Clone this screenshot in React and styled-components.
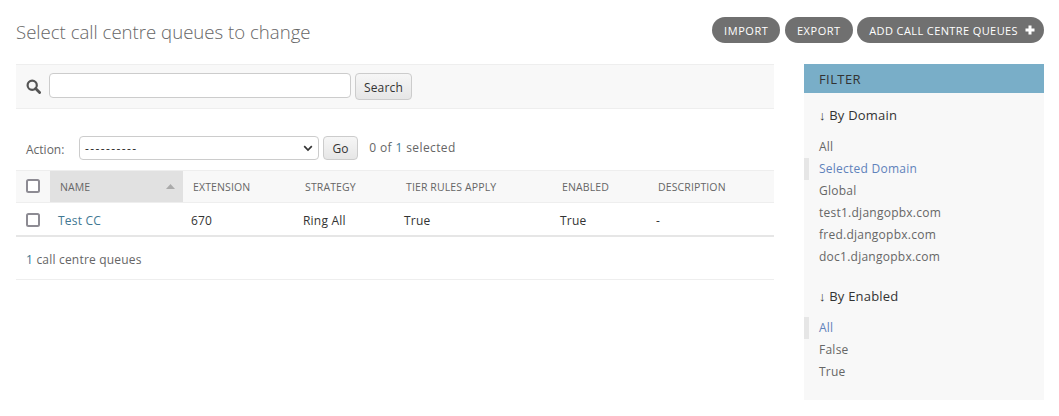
import React from "react";
import styled, { createGlobalStyle } from "styled-components";

const Global = createGlobalStyle`
  html, body { margin: 0; padding: 0; background: #fff; }
  body { font-family: "Open Sans", "Noto Sans", sans-serif; font-size: 12px; color: #666; }
`;

const Page = styled.div`
  width: 1059px;
  height: 416px;
  overflow: hidden;
  padding: 17px 15px 0 16px;
  box-sizing: border-box;
`;
const Header = styled.div`
  display: flex;
  justify-content: space-between;
  align-items: flex-start;
  height: 47px;
`;
const Title = styled.h1`
  margin: 0;
  font-size: 18.6px;
  line-height: 30px;
  font-weight: 300;
  color: #666;
`;
const Tools = styled.div`
  display: flex;
  gap: 4.5px;
`;
const Pill = styled.a`
  display: flex;
  align-items: center;
  gap: 7px;
  height: 26px;
  padding: 0 ${(p) => (p.$icon ? 9 : 12)}px 0 12px;
  border-radius: 13px;
  background: #707070;
  color: #fff;
  font-size: 11px;
  letter-spacing: ${(p) => (p.$icon ? 0.4 : 0.55)}px;
  text-transform: uppercase;
`;
const Columns = styled.div`
  display: flex;
  justify-content: space-between;
  align-items: flex-start;
`;
const Main = styled.div`
  width: 758px;
`;
const Toolbar = styled.div`
  display: flex;
  align-items: center;
  height: 45px;
  box-sizing: border-box;
  padding: 0 0 0 10px;
  background: #f8f8f8;
  border-top: 1px solid #eee;
  border-bottom: 1px solid #eee;
`;
const SearchInput = styled.div`
  width: 302px;
  height: 25px;
  box-sizing: border-box;
  margin: 0 0 2px 8px;
  background: #fff;
  border: 1px solid #ccc;
  border-radius: 4px;
`;
const Btn = styled.button`
  height: ${(p) => p.$h}px;
  margin-left: 4px;
  padding: 1px ${(p) => p.$pad}px 0;
  border: 1px solid #ccc;
  border-radius: 4px;
  background: linear-gradient(#f6f6f6, #e6e6e6);
  font-family: inherit;
  font-size: 12px;
  letter-spacing: 0.15px;
  color: #333;
  box-sizing: border-box;
`;
const Actions = styled.div`
  display: flex;
  align-items: center;
  height: 61px;
  padding: 17px 0 0 10px;
  box-sizing: border-box;
`;
const ActionLabel = styled.span`
  width: 53px;
  flex: none;
  position: relative;
  top: 1px;
`;
const Select = styled.div`
  width: 240px;
  height: 24px;
  box-sizing: border-box;
  border: 1px solid #ccc;
  border-radius: 4px;
  background: #fff;
  display: flex;
  align-items: center;
  justify-content: space-between;
  padding: 0 5px 0 5px;
  color: #333;
  font-size: 12px;
  letter-spacing: 1.4px;
`;
const Count = styled.span`
  margin-left: 11px;
  letter-spacing: 0.38px;
  position: relative;
  top: -1px;
`;
const Row = styled.div`
  display: grid;
  grid-template-columns: 34px 133px 112px 101px 156px 96px 1fr;
  align-items: center;
  box-sizing: border-box;
  height: ${(p) => (p.$head ? 33 : 34)}px;
  padding-top: ${(p) => (p.$head ? 0 : 2)}px;
  background: ${(p) => (p.$head ? "#f8f8f8" : "#fff")};
  border-top: ${(p) => (p.$head ? "1px solid #eee" : "none")};
  border-bottom: ${(p) => (p.$head ? "1px solid #eee" : "2px solid #e6e6e6")};
`;
const HeadCell = styled.div`
  height: 100%;
  display: flex;
  align-items: center;
  justify-content: space-between;
  padding: 0 ${(p) => (p.$sorted ? 8 : 10)}px 0 10px;
  box-sizing: border-box;
  font-size: 10.5px;
  letter-spacing: 0.12px;
  text-transform: uppercase;
  color: #666;
  background: ${(p) => (p.$sorted ? "#e1e1e1" : "transparent")};
`;
const Cell = styled.div`
  padding-left: 8px;
  font-size: 12px;
  letter-spacing: 0.2px;
  color: #333;
`;
const CheckCell = styled.div`
  display: flex;
  padding-left: 10px;
  margin-bottom: ${(p) => (p.$head ? 1 : 0)}px;
`;
const Check = styled.span`
  width: 14px;
  height: 14px;
  box-sizing: border-box;
  border: 2px solid #8d8b93;
  border-radius: 2.5px;
  background: #fff;
`;
const Link = styled.a`
  color: #417893;
`;
const Paginator = styled.div`
  height: 43px;
  box-sizing: border-box;
  border-bottom: 1px solid #eee;
  padding-left: 10px;
  line-height: 46px;
  letter-spacing: 0.2px;
  color: #666;
`;
const Blue = styled.span`
  color: #417893;
`;
const Filter = styled.aside`
  width: 240px;
  height: 336px;
  background: #f8f8f8;
`;
const FilterHead = styled.h2`
  margin: 0;
  height: 29px;
  line-height: 31px;
  padding-left: 15px;
  background: #79aec8;
  color: #333;
  font-size: 13px;
  font-weight: 400;
  letter-spacing: 0.4px;
  text-transform: uppercase;
`;
const FilterTitle = styled.h3`
  margin: 0;
  padding: ${(p) => p.$top}px 0 0 15px;
  height: 22px;
  line-height: 22px;
  font-size: 13px;
  font-weight: 400;
  letter-spacing: 0.2px;
  color: #333;
`;
const List = styled.ul`
  list-style: none;
  margin: ${(p) => p.$top}px 0 0;
  padding: 0;
`;
const Item = styled.li`
  height: 22px;
  line-height: 22px;
  padding-left: ${(p) => (p.$on ? 10 : 15)}px;
  border-left: ${(p) => (p.$on ? "5px solid #e6e6e6" : "none")};
  color: ${(p) => (p.$on ? "#5f82bb" : "#666")};
  font-size: 12px;
  letter-spacing: 0.25px;
`;

const SearchIcon = () => (
  <svg width="15" height="15" viewBox="0 0 15 15" fill="none" stroke="#555" strokeWidth="2.2">
    <circle cx="6.2" cy="6.2" r="4.6" />
    <path d="M9.6 9.6 13.6 13.6" strokeWidth="2.8" strokeLinecap="round" />
  </svg>
);
const Plus = () => (
  <svg width="10" height="10" viewBox="0 0 10 10">
    <path d="M5 .5v9M.5 5h9" stroke="#fff" strokeWidth="3" />
  </svg>
);
const Chevron = () => (
  <svg width="10" height="7" viewBox="0 0 10 7" fill="none" stroke="#333" strokeWidth="1.7">
    <path d="M1.2 1.2 5 5l3.8-3.8" />
  </svg>
);
const SortUp = () => (
  <svg width="9" height="5" viewBox="0 0 9 5">
    <path d="M4.5 0 9 5H0z" fill="#aaa" />
  </svg>
);

export default function App() {
  return (
    <Page>
      <Global />
      <Header>
        <Title>Select call centre queues to change</Title>
        <Tools>
          <Pill>Import</Pill>
          <Pill>Export</Pill>
          <Pill $icon>Add call centre queues <Plus /></Pill>
        </Tools>
      </Header>
      <Columns>
        <Main>
          <Toolbar>
            <SearchIcon />
            <SearchInput />
            <Btn $h={27} $pad={8}>Search</Btn>
          </Toolbar>
          <Actions>
            <ActionLabel>Action:</ActionLabel>
            <Select>----------<Chevron /></Select>
            <Btn $h={24} $pad={8.5}>Go</Btn>
            <Count>0 of <Blue>1</Blue> selected</Count>
          </Actions>
          <Row $head>
            <CheckCell $head><Check /></CheckCell>
            <HeadCell $sorted>Name<SortUp /></HeadCell>
            <HeadCell>Extension</HeadCell>
            <HeadCell>Strategy</HeadCell>
            <HeadCell>Tier rules apply</HeadCell>
            <HeadCell>Enabled</HeadCell>
            <HeadCell>Description</HeadCell>
          </Row>
          <Row>
            <CheckCell><Check /></CheckCell>
            <Cell><Link>Test CC</Link></Cell>
            <Cell>670</Cell>
            <Cell>Ring All</Cell>
            <Cell>True</Cell>
            <Cell>True</Cell>
            <Cell>-</Cell>
          </Row>
          <Paginator><Blue>1</Blue> call centre queues</Paginator>
        </Main>
        <Filter>
          <FilterHead>Filter</FilterHead>
          <FilterTitle $top={11}>↓ By Domain</FilterTitle>
          <List $top={10}>
            <Item>All</Item>
            <Item $on>Selected Domain</Item>
            <Item>Global</Item>
            <Item>test1.djangopbx.com</Item>
            <Item>fred.djangopbx.com</Item>
            <Item>doc1.djangopbx.com</Item>
          </List>
          <FilterTitle $top={17}>↓ By Enabled</FilterTitle>
          <List $top={10}>
            <Item $on>All</Item>
            <Item>False</Item>
            <Item>True</Item>
          </List>
        </Filter>
      </Columns>
    </Page>
  );
}
